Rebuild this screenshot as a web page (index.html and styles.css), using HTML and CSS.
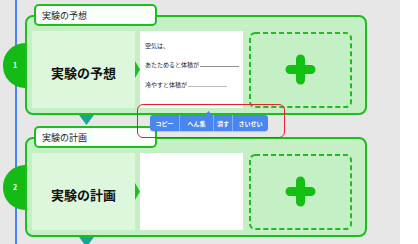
FILE: index.html
```html
<!DOCTYPE html>
<html lang="ja">
<head>
<meta charset="utf-8">
<link rel="stylesheet" href="styles.css">
</head>
<body>
<div class="page">
  <main class="canvas">
    <section class="step">
      <div class="tab">実験の予想</div>
      <div class="row">
        <div class="num">1</div>
        <div class="card">
          <div class="panel title-panel">実験の予想</div>
          <div class="arrow"></div>
          <div class="panel text-panel">
            <p>空気は、</p>
            <p>あたためると体積が<span class="blank"></span></p>
            <p>冷やすと体積が<span class="blank light"></span></p>
          </div>
          <div class="drop">
            <svg viewBox="0 0 103 77" width="103" height="77">
              <rect x="1" y="2" width="101" height="74" rx="5" fill="none" stroke="#1fbd1f" stroke-width="2" stroke-dasharray="5 3"/>
              <path d="M41 38.5H62M51.5 28V49" stroke="#12bf12" stroke-width="9" stroke-linecap="round" fill="none"/>
            </svg>
          </div>
          <div class="down"></div>
        </div>
      </div>
    </section>
    <section class="step">
      <div class="tab">実験の計画</div>
      <div class="row">
        <div class="num">2</div>
        <div class="card">
          <div class="panel title-panel">実験の計画</div>
          <div class="arrow"></div>
          <div class="panel text-panel"></div>
          <div class="drop">
            <svg viewBox="0 0 103 77" width="103" height="77">
              <rect x="1" y="2" width="101" height="74" rx="5" fill="none" stroke="#1fbd1f" stroke-width="2" stroke-dasharray="5 3"/>
              <path d="M41 38.5H62M51.5 28V49" stroke="#12bf12" stroke-width="9" stroke-linecap="round" fill="none"/>
            </svg>
          </div>
          <div class="down"></div>
        </div>
      </div>
    </section>
    <div class="select-box"></div>
    <div class="toolbar">
      <span class="tb-btn w1">コピー</span>
      <span class="tb-btn w2">へん集</span>
      <span class="tb-btn w3">消す</span>
      <span class="tb-btn w4">さいせい</span>
    </div>
  </main>
  <div class="strip"></div>
</div>
</body>
</html>
```
FILE: styles.css
```css
* { box-sizing: border-box; }
html, body { margin: 0; padding: 0; }
body {
  font-family: "Noto Sans CJK JP", "Noto Sans", sans-serif;
  background: #ffffff;
}
.page {
  display: flex;
  width: 418px;
  height: 244px;
  overflow: hidden;
}
.canvas {
  position: relative;
  width: 400px;
  height: 244px;
  padding-top: 4px;
  background: linear-gradient(to right, transparent 15px, #4a84f4 15px, #4a84f4 17px, transparent 17px), #e7e7e7;
  overflow: hidden;
}
.strip { width: 18px; background: #ffffff; }
.step { display: flex; flex-direction: column; margin-bottom: 11px; }
.tab {
  position: relative;
  z-index: 2;
  margin-left: 34px;
  margin-bottom: -11px;
  width: 123px;
  height: 22px;
  border: 2px solid #1fbd1f;
  border-radius: 5px;
  background: #fbfffb;
  padding-left: 6px;
  display: flex;
  align-items: center;
  font-size: 9px;
  color: #222;
}
.row { display: flex; align-items: center; padding-left: 3px; }
.num {
  width: 22px;
  height: 45px;
  border-radius: 23px 0 0 23px;
  background: #14bb14;
  color: #fff;
  font-size: 7px;
  font-weight: 700;
  display: flex;
  align-items: center;
  justify-content: center;
  padding-left: 2px;
}
.card {
  position: relative;
  width: 342px;
  height: 100px;
  border: 2px solid #1fbd1f;
  border-radius: 8px;
  background: #c5f0c5;
  padding: 14px 13px 5px 5px;
  display: flex;
}
.panel { width: 103px; height: 77px; }
.title-panel {
  background: #ddf7dd;
  display: flex;
  align-items: center;
  justify-content: center;
  font-size: 13px;
  font-weight: 700;
  color: #111;
  padding-top: 5px;
}
.arrow {
  width: 5px;
  height: 17px;
  align-self: center;
  background: #1fbd1f;
  clip-path: polygon(0 0, 100% 50%, 0 100%);
}
.text-panel {
  background: #fff;
  padding: 5px 0 0 5px;
  font-size: 6px;
  color: #222;
}
.text-panel p { margin: 0; line-height: 19.4px; white-space: nowrap; }
.blank {
  display: inline-block;
  width: 39px;
  height: 5px;
  margin-left: 1px;
  border-bottom: 1px solid #8f8f8f;
}
.blank.light { border-bottom-color: #b9b9b9; }
.drop { margin-left: 6px; width: 103px; height: 77px; }
.drop svg { display: block; }
.down {
  position: absolute;
  left: 52px;
  bottom: -12px;
  width: 15px;
  height: 10px;
  background: #17a593;
  clip-path: polygon(0 0, 100% 0, 50% 100%);
}
.select-box {
  position: absolute;
  left: 137px;
  top: 104px;
  width: 148px;
  height: 34px;
  border: 1.5px solid #e5232b;
  border-radius: 6px;
  z-index: 5;
}
.toolbar {
  position: absolute;
  left: 150px;
  top: 115px;
  height: 16px;
  display: flex;
  background: #4b86ef;
  border-radius: 3px;
  z-index: 6;
  box-shadow: 0 1px 1px rgba(0,0,0,0.15);
}
.toolbar::before {
  content: "";
  position: absolute;
  left: 55px;
  top: -4px;
  width: 7px;
  height: 4px;
  background: #4b86ef;
  clip-path: polygon(50% 0, 100% 100%, 0 100%);
}
.tb-btn {
  display: flex;
  align-items: center;
  justify-content: center;
  color: #fff;
  font-size: 6px;
  font-weight: 700;
  white-space: nowrap;
  border-left: 1px solid rgba(255,255,255,0.35);
}
.tb-btn.w1 { width: 29px; border-left: none; }
.tb-btn.w2 { width: 34px; }
.tb-btn.w3 { width: 19px; }
.tb-btn.w4 { width: 36px; }
```
